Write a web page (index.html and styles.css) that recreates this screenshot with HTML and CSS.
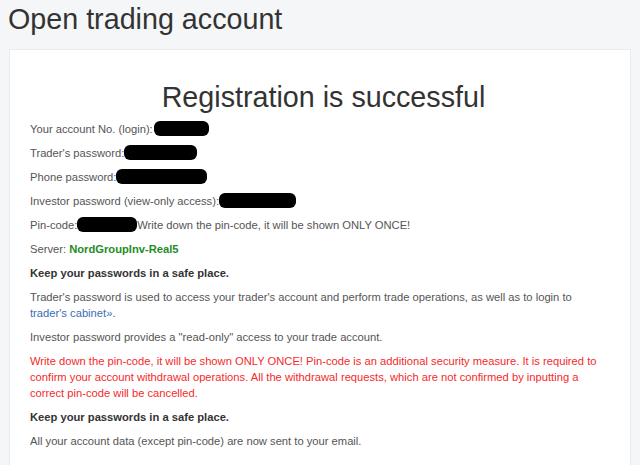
FILE: index.html
```html
<!DOCTYPE html>
<html>
<head>
<meta charset="utf-8">
<link rel="stylesheet" href="styles.css">
</head>
<body>
<h1 class="page-title">Open trading account</h1>
<div class="card">
  <h2 class="card-title">Registration is successful</h2>
  <p class="line">Your account No. (login):<span class="mask m1"></span></p>
  <p class="line">Trader's password:<span class="mask m2"></span></p>
  <p class="line">Phone password:<span class="mask m3"></span></p>
  <p class="line">Investor password (view-only access):<span class="mask m4"></span></p>
  <p class="line">Pin-code:<span class="mask m5"></span>Write down the pin-code, it will be shown ONLY ONCE!</p>
  <p class="line">Server: <b class="server">NordGroupInv-Real5</b></p>
  <p class="line strong">Keep your passwords in a safe place.</p>
  <p class="line">Trader's password is used to access your trader's account and perform trade operations, as well as to login to <a class="link" href="#">trader's cabinet»</a>.</p>
  <p class="line">Investor password provides a "read-only" access to your trade account.</p>
  <p class="line warn">Write down the pin-code, it will be shown ONLY ONCE! Pin-code is an additional security measure. It is required to confirm your account withdrawal operations. All the withdrawal requests, which are not confirmed by inputting a correct pin-code will be cancelled.</p>
  <p class="line strong">Keep your passwords in a safe place.</p>
  <p class="line">All your account data (except pin-code) are now sent to your email.</p>
</div>
</body>
</html>
```
FILE: styles.css
```css
html, body {
  margin: 0;
  padding: 0;
  background: #f5f6f8;
  font-family: "Liberation Sans", Arial, sans-serif;
  height: 465px;
  overflow: hidden;
}
.page-title {
  margin: 0;
  padding: 2px 0 0 8px;
  font-size: 28.7px;
  font-weight: normal;
  line-height: 34px;
  color: #333;
}
.card {
  margin: 13px 0 0 9px;
  width: 575px;
  padding: 31px 25px 20px 20px;
  background: #fff;
  border: 1px solid #e9eaec;
  border-bottom: none;
  min-height: 500px;
}
.card-title {
  margin: 0 0 8px 0;
  padding-left: 12px;
  text-align: center;
  font-size: 28.7px;
  font-weight: normal;
  line-height: 32px;
  color: #333;
}
.line {
  margin: 0 0 8px 0;
  font-size: 11.2px;
  line-height: 16px;
  color: #555;
}
.mask {
  display: inline-block;
  height: 15px;
  background: #000;
  border-radius: 6px;
  vertical-align: -3px;
}
.m1 { width: 55px; margin-left: 1px; }
.m2 { width: 73px; }
.m3 { width: 91px; }
.m4 { width: 77px; }
.m5 { width: 60px; }
.server { color: #1f8c1f; font-weight: bold; }
.strong { font-weight: bold; color: #333; }
.link { color: #3a6db5; text-decoration: none; }
.warn { color: #f52a2a; }
```
